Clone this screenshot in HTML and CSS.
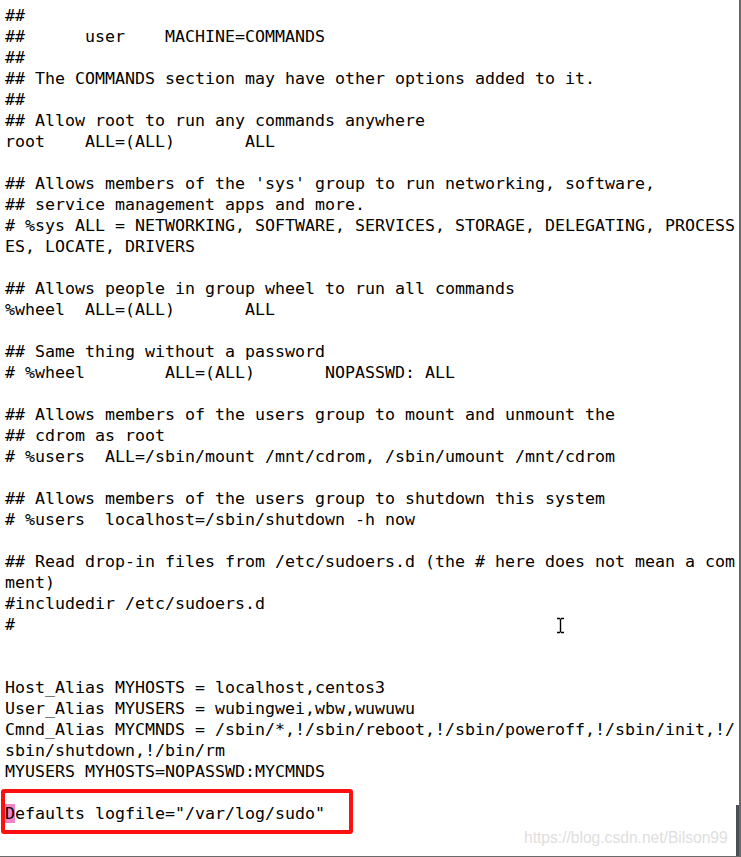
FILE: index.html
```html
<!DOCTYPE html>
<html>
<head>
<meta charset="utf-8">
<link rel="stylesheet" href="styles.css">
</head>
<body>
<div class="screen">
<pre class="term">##
##      user    MACHINE=COMMANDS
##
## The COMMANDS section may have other options added to it.
##
## Allow root to run any commands anywhere
root    ALL=(ALL)       ALL

## Allows members of the 'sys' group to run networking, software,
## service management apps and more.
# %sys ALL = NETWORKING, SOFTWARE, SERVICES, STORAGE, DELEGATING, PROCESS
ES, LOCATE, DRIVERS

## Allows people in group wheel to run all commands
%wheel  ALL=(ALL)       ALL

## Same thing without a password
# %wheel        ALL=(ALL)       NOPASSWD: ALL

## Allows members of the users group to mount and unmount the
## cdrom as root
# %users  ALL=/sbin/mount /mnt/cdrom, /sbin/umount /mnt/cdrom

## Allows members of the users group to shutdown this system
# %users  localhost=/sbin/shutdown -h now

## Read drop-in files from /etc/sudoers.d (the # here does not mean a com
ment)
#includedir /etc/sudoers.d
#


Host_Alias MYHOSTS = localhost,centos3
User_Alias MYUSERS = wubingwei,wbw,wuwuwu
Cmnd_Alias MYCMNDS = /sbin/*,!/sbin/reboot,!/sbin/poweroff,!/sbin/init,!/
sbin/shutdown,!/bin/rm
MYUSERS MYHOSTS=NOPASSWD:MYCMNDS

<span class="cursor">D</span>efaults logfile="/var/log/sudo"</pre>
<div class="highlight"></div>
<svg class="ibeam" width="9" height="17" viewBox="0 0 9 17"><path d="M1 1.5h3M5 1.5h3M4.5 1.5v14M1 15.5h3M5 15.5h3" stroke="#000" stroke-width="1.4" fill="none"/></svg>
<div class="watermark">https://blog.csdn.net/Bilson99</div>
<div class="scrollbar"></div>
</div>
</body>
</html>
```

FILE: styles.css
```css
html, body {
  margin: 0;
  padding: 0;
  background: #ffffff;
}
.screen {
  position: relative;
  width: 739px;
  height: 856px;
  border-right: 2px solid #6a6a6a;
  border-bottom: 1px solid #6a6a6a;
  overflow: hidden;
  background: #ffffff;
}
.term {
  margin: 0;
  padding: 5px 0 0 5px;
  font-family: "DejaVu Sans Mono", monospace;
  font-size: 16.61px;
  line-height: 21px;
  color: #000000;
  white-space: pre;
}
.cursor {
  background: #f384c4;
}
.highlight {
  position: absolute;
  left: 1px;
  top: 789px;
  width: 344px;
  height: 37px;
  border: 4px solid #ff1010;
  border-radius: 3px;
}
.ibeam {
  position: absolute;
  left: 556px;
  top: 617px;
}
.watermark {
  position: absolute;
  left: 524px;
  top: 829px;
  font-family: "Liberation Sans", Arial, sans-serif;
  font-size: 15.6px;
  color: #dedede;
}
.scrollbar {
  position: absolute;
  right: 0;
  top: 805px;
  width: 3px;
  height: 52px;
  background: #4b5058;
}
```
